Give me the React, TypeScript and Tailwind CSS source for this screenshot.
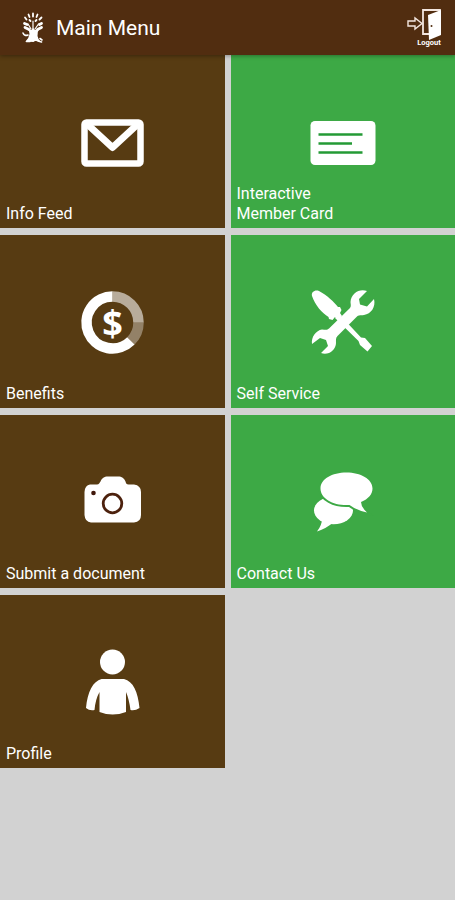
import type { ReactNode } from 'react'
import clsx from 'clsx'

type Tile = { label: ReactNode; href: string; color: 'brown' | 'green'; icon: ReactNode }

function Icon({ children }: { children: ReactNode }) {
  return (
    <svg viewBox="0 0 72 72" className="col-start-1 row-start-1 size-18 place-self-center fill-white" aria-hidden="true">
      {children}
    </svg>
  )
}

function EnvelopeIcon() {
  return (
    <Icon>
      <g fill="none" stroke="#fff" strokeWidth="6.5" strokeLinejoin="round">
        <rect x="8.5" y="16.5" width="56" height="41" rx="2" />
        <path d="M10 17 36.500 41.500 63 17" strokeWidth="7" />
      </g>
    </Icon>
  )
}

function CardIcon() {
  return (
    <Icon>
      <rect x="3.500" y="15" width="65" height="44" rx="4.500" />
      <path d="M11.500 28.500h44M11.500 37.500h33.500M11.500 46.500h44" stroke="#249a36" strokeWidth="2.600" />
    </Icon>
  )
}

function BenefitsIcon() {
  return (
    <Icon>
      <g fill="none" stroke="#fff" strokeWidth="10.500">
        <path d="M36.500 10.500A26 26 0 0 1 62.500 36.500" opacity=".58" />
        <path d="M62.500 36.500A26 26 0 0 1 54.900 54.900" opacity=".36" />
        <path d="M54.900 54.900A26 26 0 1 1 36.500 10.500" />
      </g>
      <text x="36.500" y="49.500" textAnchor="middle" fontSize="36" fontWeight="700" fontFamily="'Open Sans', sans-serif">$</text>
    </Icon>
  )
}

function ToolsIcon() {
  return (
    <Icon>
      <path d="M5 10C4 6 8 3.500 12 5C20 9 27 16 31 21L33 21 34.500 24 33 27 35 30 31 34 28 31 25.500 34 22 33 21.500 31C15 27 8 19 5 10Z" />
      <path d="M32 28 54 51.500 58 52 65 60 60.500 65.500 53 59 51.500 55 28 32Z" />
      <path d="M60 5C53 2 44 7 43.500 16C43.500 18 44.500 20 43 22L22 42.500C20 44.500 18 43.500 15 43.500C9 44.500 4 51 5 58L13 52 19 54 21 60 14 67C21 70 29 64 29 57C29 54 28.500 52 30.500 50L50 30.500C52 28.500 54 29.500 57 29C64 28 69 21 67 13L60 20.500 53 18.500 52 13Z" />
    </Icon>
  )
}

function CameraIcon() {
  return (
    <Icon>
      <path d="M14 18.500H21C23 18.500 23.500 17 24.500 15.500C26 12 28 10.500 32 10.500H42C46 10.500 48 12 49.500 15.500C50 17.500 50.500 18.500 52.500 18.500H58Q65 19.500 65 26V49Q65 56 58 56.500H15Q9 56 8.500 49V26Q9 19 14 18.500Z" />
      <circle cx="36.500" cy="37.500" r="9.300" fill="none" stroke="#4c210d" strokeWidth="2.800" />
      <circle cx="17.500" cy="27" r="2.300" fill="#40170b" />
    </Icon>
  )
}

function ChatIcon() {
  return (
    <Icon>
      <ellipse cx="26.500" cy="44.500" rx="19.500" ry="13.800" />
      <path d="M15 53Q15 59 10 65.500Q20 62 25.500 57Z" />
      <path
        d="M39.500 6.500C53.500 6.500 65.500 13 65.500 22.500C65.500 28 61.500 33 54 36Q54 41 60 46.500Q49 44 42.500 39C27 40 13.500 33 13.500 22.500C13.500 13 25 6.500 39.500 6.500Z"
        stroke="#3da945" strokeWidth="4" paintOrder="stroke"
      />
    </Icon>
  )
}

function PersonIcon() {
  return (
    <Icon>
      <circle cx="36.500" cy="16" r="12.500" />
      <path d="M25.500 33H48C57 35 62 46 63.500 62Q59 65 54.500 64Q53 53 50 46V66Q36.500 71 23.500 66V46Q19.500 53 18.500 64Q13.500 65 10 62C11.500 46 17 35 25.500 33Z" />
    </Icon>
  )
}

// Tree crest shown next to the page title
function TreeLogo() {
  return (
    <svg viewBox="0 0 24 32" className="h-8 w-6" aria-hidden="true">
      <g fill="none" stroke="#fff" strokeLinecap="round">
        <path d="M12 17V9M10 17 7 12M14 17 17.500 12" strokeWidth="1.200" />
        <path d="M12 4.500V1.500M8.500 5 7.500 2.500M15.500 5 16.500 2.500M5.500 7.500 4 5.500M18.500 7.500 20.500 5.500M9.500 9 8.500 8M14.500 9 15.500 8" strokeWidth="1.800" />
        <path d="M3.500 11.500 6 12.500M20.500 11.500 18.500 12.500M4 15.500 8 17.500M20.500 15.500 16.500 17.500" strokeWidth="2.800" />
        <path d="M7 23Q3.500 24.500 2 21M5.500 29.500H9M17 29 20.500 30M19 26.500 21 28" strokeWidth="1.600" />
      </g>
      <path d="M6 16.500 10.500 18 12 16 14 18 18.500 16.500Q16 20 16.500 24 17 27 19.500 29.500L14 29 12.500 30 4.500 29.500Q8 26 8.500 22 8.500 18.500 6 16.500Z" fill="#fff" />
    </svg>
  )
}

function LogoutIcon() {
  return (
    <svg viewBox="0 0 36 40" className="h-10 w-9" aria-hidden="true">
      <path d="M2 13H9V10L16 15.500 9 21V18H2Z" fill="none" stroke="#f3e6df" strokeWidth="1.400" />
      <path d="M23 26H17V2H34V26" fill="none" stroke="#f3e6df" strokeWidth="1.800" />
      <path d="M22 7 35 2V27L23 32Z" fill="#fff" />
      <circle cx="25.500" cy="18" r="1" fill="#512d10" />
      <text x="23" y="37" textAnchor="middle" fontSize="7.500" fontWeight="700" fill="#fff" fontFamily="Roboto, sans-serif">Logout</text>
    </svg>
  )
}

const tiles: Tile[] = [
  { label: 'Info Feed', href: '#info-feed', color: 'brown', icon: <EnvelopeIcon /> },
  { label: <>Interactive<br />Member Card</>, href: '#member-card', color: 'green', icon: <CardIcon /> },
  { label: 'Benefits', href: '#benefits', color: 'brown', icon: <BenefitsIcon /> },
  { label: 'Self Service', href: '#self-service', color: 'green', icon: <ToolsIcon /> },
  { label: 'Submit a document', href: '#submit', color: 'brown', icon: <CameraIcon /> },
  { label: 'Contact Us', href: '#contact', color: 'green', icon: <ChatIcon /> },
  { label: 'Profile', href: '#profile', color: 'brown', icon: <PersonIcon /> },
]

export default function App() {
  return (
    <div className="min-h-screen bg-[#d2d2d2] font-[Roboto,sans-serif] text-white">
      <header className="relative flex h-[55px] items-center bg-[#512d10] pr-[13px] pl-[21px] shadow-[0_1px_4px_rgba(0,0,0,0.35)]">
        <TreeLogo />
        <h1 className="ml-[11px] flex-1 text-[21px] leading-7">Main Menu</h1>
        <button type="button" aria-label="Logout">
          <LogoutIcon />
        </button>
      </header>

      <nav className="grid grid-cols-2 gap-x-1.5 gap-y-[7px]">
        {tiles.map(t => (
          <a
            key={t.href}
            href={t.href}
            className={clsx('grid min-h-[173px]', t.color === 'brown' ? 'bg-[#573b12]' : 'bg-[#3da945]')}
          >
            {t.icon}
            <span className="col-start-1 row-start-1 self-end px-1.5 pb-1 text-base leading-5">{t.label}</span>
          </a>
        ))}
      </nav>
    </div>
  )
}
